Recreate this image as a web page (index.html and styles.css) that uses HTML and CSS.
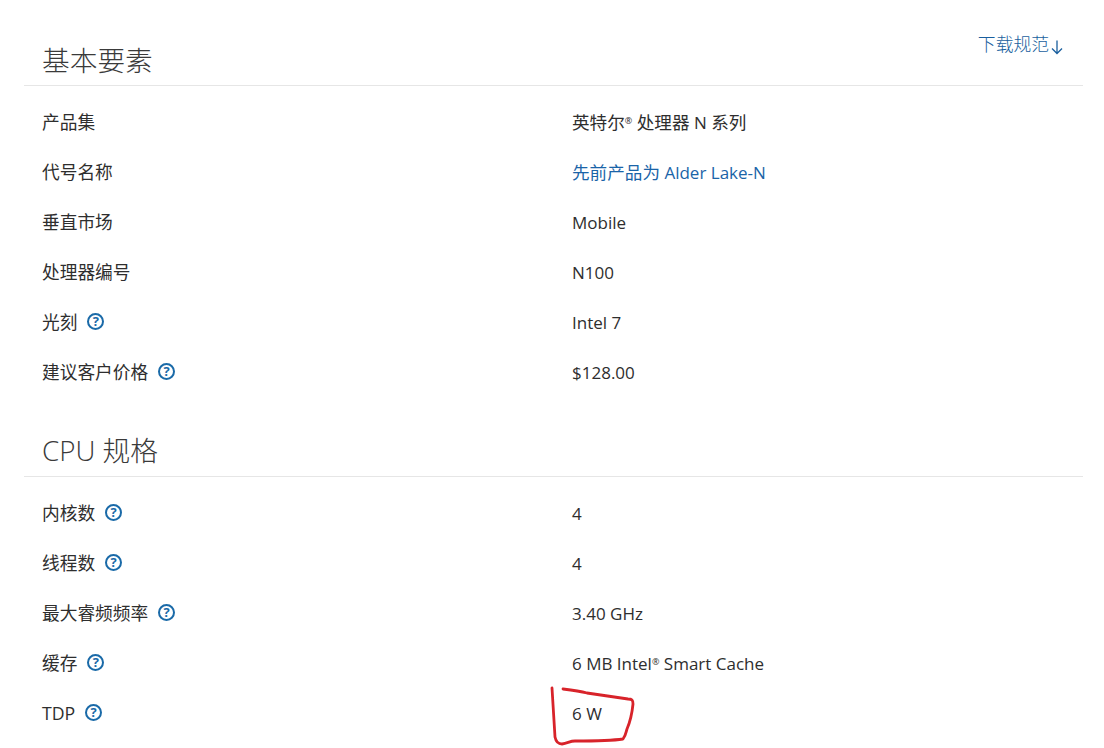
FILE: index.html
```html
<!DOCTYPE html>
<html lang="zh-CN">
<head>
<meta charset="utf-8">
<title>规格</title>
<link rel="stylesheet" href="styles.css">
</head>
<body>
<main class="page">
  <section class="section first">
    <header class="head">
      <h2>基本要素</h2>
      <a class="download">下载规范<svg class="arrow" viewBox="0 0 14 16" width="14" height="16"><path d="M7 1.5V14.5M2 9.5L7 14.5L12 9.5" fill="none" stroke="currentColor" stroke-width="1.3"/></svg></a>
    </header>
    <div class="row"><div class="label">产品集</div><div class="value"><span class="cjk">英特尔</span><sup>®</sup> <span class="cjk">处理器</span> N <span class="cjk">系列</span></div></div>
    <div class="row"><div class="label">代号名称</div><div class="value"><a class="link"><span class="cjk">先前产品为</span> Alder Lake-N</a></div></div>
    <div class="row"><div class="label">垂直市场</div><div class="value">Mobile</div></div>
    <div class="row"><div class="label">处理器编号</div><div class="value">N100</div></div>
    <div class="row"><div class="label">光刻<span class="help">?</span></div><div class="value">Intel 7</div></div>
    <div class="row"><div class="label">建议客户价格<span class="help">?</span></div><div class="value">$128.00</div></div>
  </section>
  <section class="section">
    <header class="head">
      <h2>CPU 规格</h2>
    </header>
    <div class="row"><div class="label">内核数<span class="help">?</span></div><div class="value">4</div></div>
    <div class="row"><div class="label">线程数<span class="help">?</span></div><div class="value">4</div></div>
    <div class="row"><div class="label">最大睿频频率<span class="help">?</span></div><div class="value">3.40 GHz</div></div>
    <div class="row"><div class="label">缓存<span class="help">?</span></div><div class="value">6 MB Intel<sup>®</sup> Smart Cache</div></div>
    <div class="row"><div class="label">TDP<span class="help">?</span></div><div class="value">6 W</div></div>
  </section>
</main>
<svg class="scribble" viewBox="0 0 1104 748" width="1104" height="748"><path d="M552 688C553 705 554 722 555 737C556 742 558 744 562 744C568 743 570 741 575 741C590 741 610 741 623 739C626 735 626 732 627 729C630 722 632 714 633 704C633 700 632 699 628 699C615 697 600 695 587 693C580 691 572 690 563 689" fill="none" stroke="#d8232a" stroke-width="2.8" stroke-linecap="round" stroke-linejoin="round"/></svg>
</body>
</html>
```
FILE: styles.css
```css
* { box-sizing: border-box; }
html, body { margin: 0; padding: 0; background: #fff; }
body {
  width: 1104px;
  height: 748px;
  overflow: hidden;
  position: relative;
  font-family: "Open Sans", "Noto Sans CJK SC", sans-serif;
  font-size: 17px;
  color: #2e2e2e;
}
.page { padding: 0 21px 0 24px; }
.section { padding-bottom: 20px; }
.section.first { padding-top: 27px; }
.head {
  display: flex;
  justify-content: space-between;
  height: 59px;
  padding: 0 19px 0 18px;
  border-bottom: 1px solid #e6e6e6;
  margin-bottom: 12px;
}
h2 {
  margin: 0;
  padding-top: 12px;
  font-size: 27.7px;
  line-height: 40px;
  font-weight: 300;
  color: #3a3a3a;
}
.section.first h2 { padding-top: 13px; }
.download {
  display: flex;
  align-items: flex-start;
  color: #1a5f9e;
  font-size: 17.8px;
  font-weight: 300;
  line-height: 26px;
  margin-top: 4px;
}
.arrow { margin-top: 8px; margin-left: 1px; }
.row {
  display: grid;
  grid-template-columns: 530px 1fr;
  height: 50px;
  padding-left: 18px;
  align-items: center;
  line-height: 24px;
}
.label { display: flex; align-items: center; padding-bottom: 2px; font-size: 17.7px; white-space: pre-wrap; }
.value { white-space: pre-wrap; }
.value:has(.cjk) { padding-bottom: 1px; }
.cjk { font-size: 17.6px; line-height: 1; }
.link { color: #1a64a8; }
sup { font-size: 9px; line-height: 0; vertical-align: 5px; }
.help {
  display: inline-flex;
  align-items: center;
  justify-content: center;
  width: 17px;
  height: 17px;
  margin: 0 0 2px 10px;
  border: 2px solid #1a6aa8;
  border-radius: 50%;
  color: #1a6aa8;
  font-size: 13px;
  line-height: 1;
  font-weight: 700;
}
.scribble { position: absolute; left: 0; top: 0; pointer-events: none; }
```
